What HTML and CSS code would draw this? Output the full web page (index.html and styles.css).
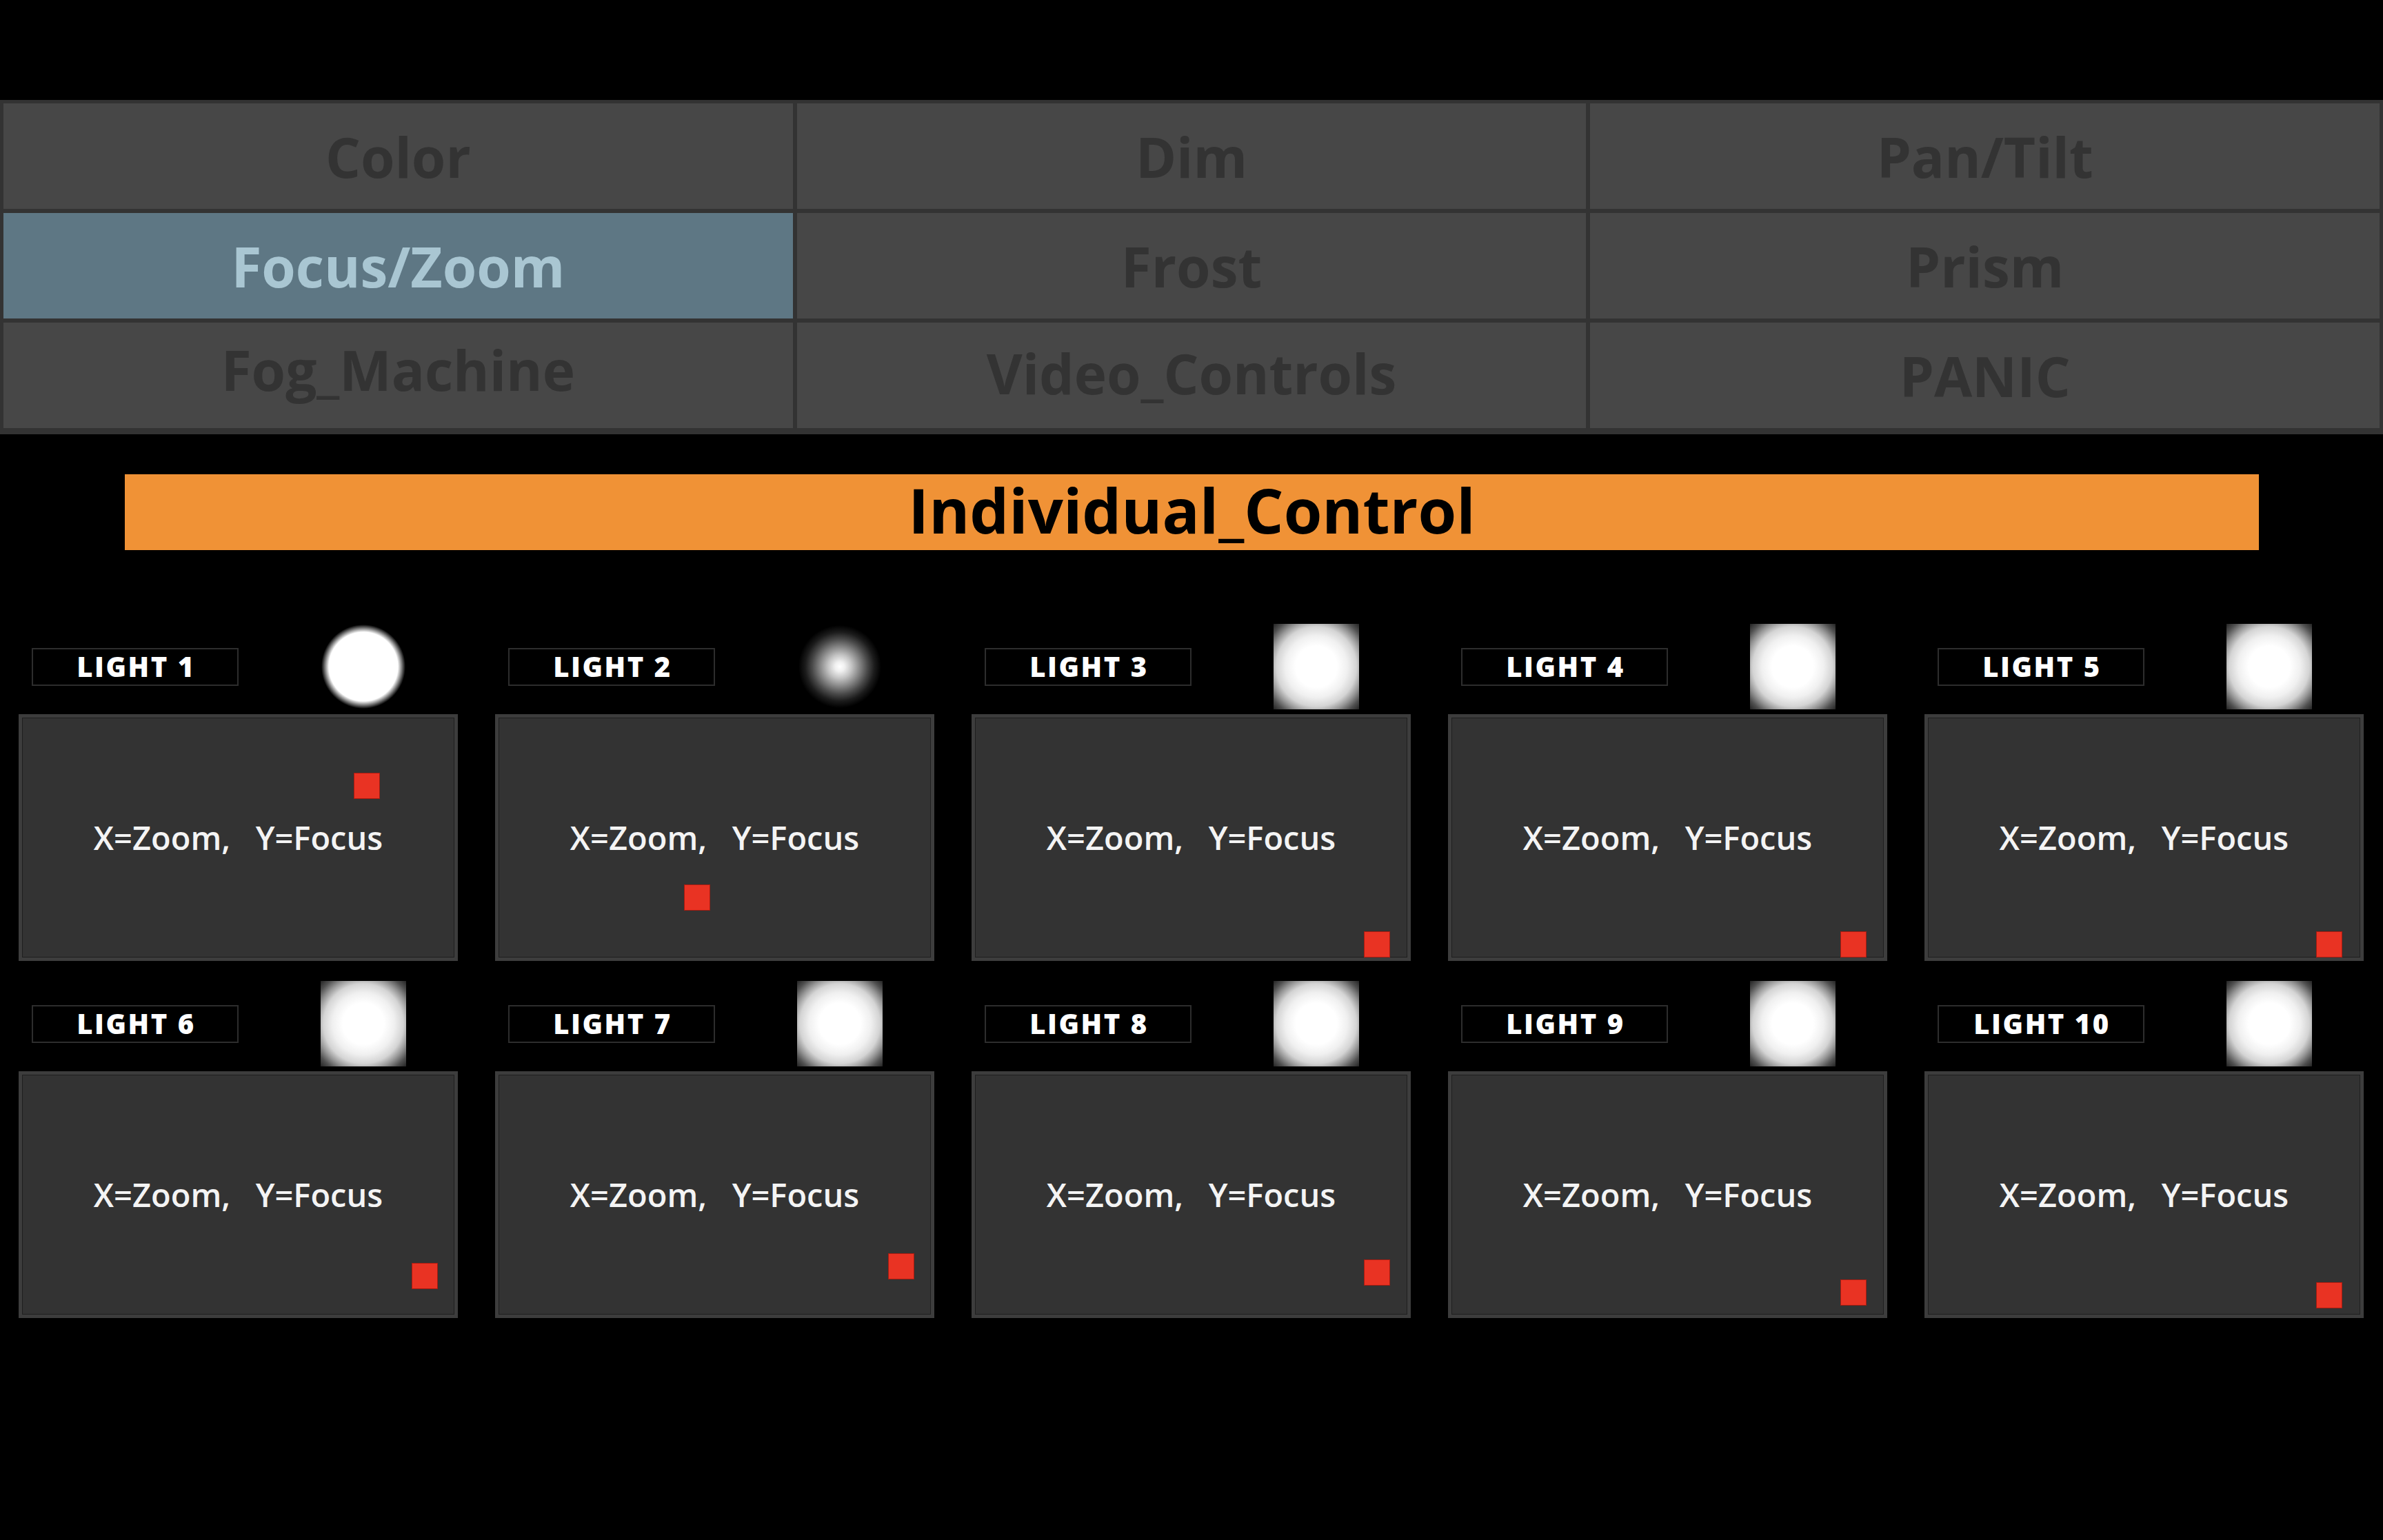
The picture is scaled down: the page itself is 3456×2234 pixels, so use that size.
FILE: index.html
```html
<!DOCTYPE html>
<html lang="en">
<head>
<meta charset="utf-8">
<title>Focus/Zoom</title>
<link rel="stylesheet" href="styles.css">
</head>
<body>
<div class="app">
  <nav class="tabs">
    <div class="tab">Color</div>
    <div class="tab">Dim</div>
    <div class="tab">Pan/Tilt</div>
    <div class="tab active">Focus/Zoom</div>
    <div class="tab">Frost</div>
    <div class="tab">Prism</div>
    <div class="tab raised">Fog_Machine</div>
    <div class="tab raised-sm">Video_Controls</div>
    <div class="tab">PANIC</div>
  </nav>

  <div class="banner">Individual_Control</div>

  <section class="lights">
    <div class="light">
      <div class="light-head"><div class="label">LIGHT 1</div><div class="beam beam-sharp"></div></div>
      <div class="pad"><span class="pad-text">X=Zoom,   Y=Focus</span><div class="dot" style="left:481px;top:80px"></div></div>
    </div>
    <div class="light">
      <div class="light-head"><div class="label">LIGHT 2</div><div class="beam beam-soft"></div></div>
      <div class="pad"><span class="pad-text">X=Zoom,   Y=Focus</span><div class="dot" style="left:269px;top:242px"></div></div>
    </div>
    <div class="light">
      <div class="light-head"><div class="label">LIGHT 3</div><div class="beam beam-wide"></div></div>
      <div class="pad"><span class="pad-text">X=Zoom,   Y=Focus</span><div class="dot" style="left:564px;top:310px"></div></div>
    </div>
    <div class="light">
      <div class="light-head"><div class="label">LIGHT 4</div><div class="beam beam-wide"></div></div>
      <div class="pad"><span class="pad-text">X=Zoom,   Y=Focus</span><div class="dot" style="left:564px;top:310px"></div></div>
    </div>
    <div class="light">
      <div class="light-head"><div class="label">LIGHT 5</div><div class="beam beam-wide"></div></div>
      <div class="pad"><span class="pad-text">X=Zoom,   Y=Focus</span><div class="dot" style="left:563px;top:310px"></div></div>
    </div>
    <div class="light">
      <div class="light-head"><div class="label">LIGHT 6</div><div class="beam beam-wide"></div></div>
      <div class="pad"><span class="pad-text">X=Zoom,   Y=Focus</span><div class="dot" style="left:565px;top:273px"></div></div>
    </div>
    <div class="light">
      <div class="light-head"><div class="label">LIGHT 7</div><div class="beam beam-wide"></div></div>
      <div class="pad"><span class="pad-text">X=Zoom,   Y=Focus</span><div class="dot" style="left:565px;top:259px"></div></div>
    </div>
    <div class="light">
      <div class="light-head"><div class="label">LIGHT 8</div><div class="beam beam-wide"></div></div>
      <div class="pad"><span class="pad-text">X=Zoom,   Y=Focus</span><div class="dot" style="left:564px;top:268px"></div></div>
    </div>
    <div class="light">
      <div class="light-head"><div class="label">LIGHT 9</div><div class="beam beam-wide"></div></div>
      <div class="pad"><span class="pad-text">X=Zoom,   Y=Focus</span><div class="dot" style="left:564px;top:297px"></div></div>
    </div>
    <div class="light">
      <div class="light-head"><div class="label">LIGHT 10</div><div class="beam beam-wide"></div></div>
      <div class="pad"><span class="pad-text">X=Zoom,   Y=Focus</span><div class="dot" style="left:563px;top:301px"></div></div>
    </div>
  </section>
</div>
</body>
</html>
```

FILE: styles.css
```css
* { box-sizing: border-box; }

html, body {
  margin: 0;
  padding: 0;
  background: #000;
}

body {
  width: 3456px;
  height: 2234px;
  overflow: hidden;
  font-family: "Open Sans", "Noto Sans", "Liberation Sans", sans-serif;
}

.app {
  padding-top: 145px;
}

/* ---------- tab grid ---------- */
.tabs {
  display: grid;
  grid-template-columns: repeat(3, 1fr);
  grid-template-rows: repeat(3, 153px);
  column-gap: 6px;
  row-gap: 6px;
  padding: 5px 5px 9px 5px;
  background: #333333;
}

.tab {
  display: flex;
  align-items: center;
  justify-content: center;
  background: #474747;
  color: #333333;
  font-size: 80px;
  font-weight: 700;
  line-height: 1;
}

.tab.raised {
  padding-bottom: 18px;
}

.tab.raised-sm {
  padding-bottom: 8px;
}

.tab.active {
  background: #5e7784;
  color: #a9c6d2;
}

/* ---------- banner ---------- */
.banner {
  margin: 58px 180px 0 181px;
  height: 110px;
  padding-bottom: 8px;
  display: flex;
  align-items: center;
  justify-content: center;
  background: #f09236;
  color: #000;
  font-size: 90px;
  font-weight: 700;
  line-height: 1;
}

/* ---------- light grid ---------- */
.lights {
  margin-top: 107px;
  display: grid;
  grid-template-columns: repeat(5, 1fr);
  column-gap: 54px;
  row-gap: 29px;
  padding: 0 28px 0 27px;
}

.light {
  display: flex;
  flex-direction: column;
  gap: 7px;
}

.light-head {
  height: 124px;
  display: flex;
  align-items: center;
}

.label {
  margin-left: 19px;
  width: 300px;
  height: 55px;
  border: 2px solid #2d2d2d;
  display: flex;
  align-items: center;
  justify-content: center;
  padding-left: 3px;
  color: #fff;
  font-size: 40px;
  font-weight: 800;
  letter-spacing: 2.5px;
  line-height: 1;
}

.beam {
  margin-left: 119px;
  width: 124px;
  height: 124px;
  flex: none;
}

.beam-sharp {
  background: radial-gradient(circle at 50% 50%, #fff 0, #fff 50px, #000 61px);
}

.beam-soft {
  background: radial-gradient(circle at 50% 50%,
    #fff 0, #f0f0f0 7px, #c4c4c4 17px, #8a8a8a 28px,
    #4a4a4a 40px, #1c1c1c 50px, #000 60px);
}

.beam-wide {
  background: radial-gradient(circle at 50% 50%,
    #fff 0, #fff 30px, #f0f0f0 45px, #d4d4d4 58px,
    #969696 68px, #505050 78px, #222 88px);
}

.pad {
  position: relative;
  height: 358px;
  border: 5px solid #3d3d3d;
  background: #333333;
  box-shadow: inset 0 0 0 1px #1f1f1f;
  display: flex;
  align-items: center;
  justify-content: center;
}

.pad-text {
  white-space: pre;
  color: #f4f4f4;
  font-size: 47px;
  font-weight: 650;
  line-height: 1;
}

.dot {
  position: absolute;
  width: 38px;
  height: 38px;
  background: #e93323;
  border: 1px solid #a61b10;
}
```
